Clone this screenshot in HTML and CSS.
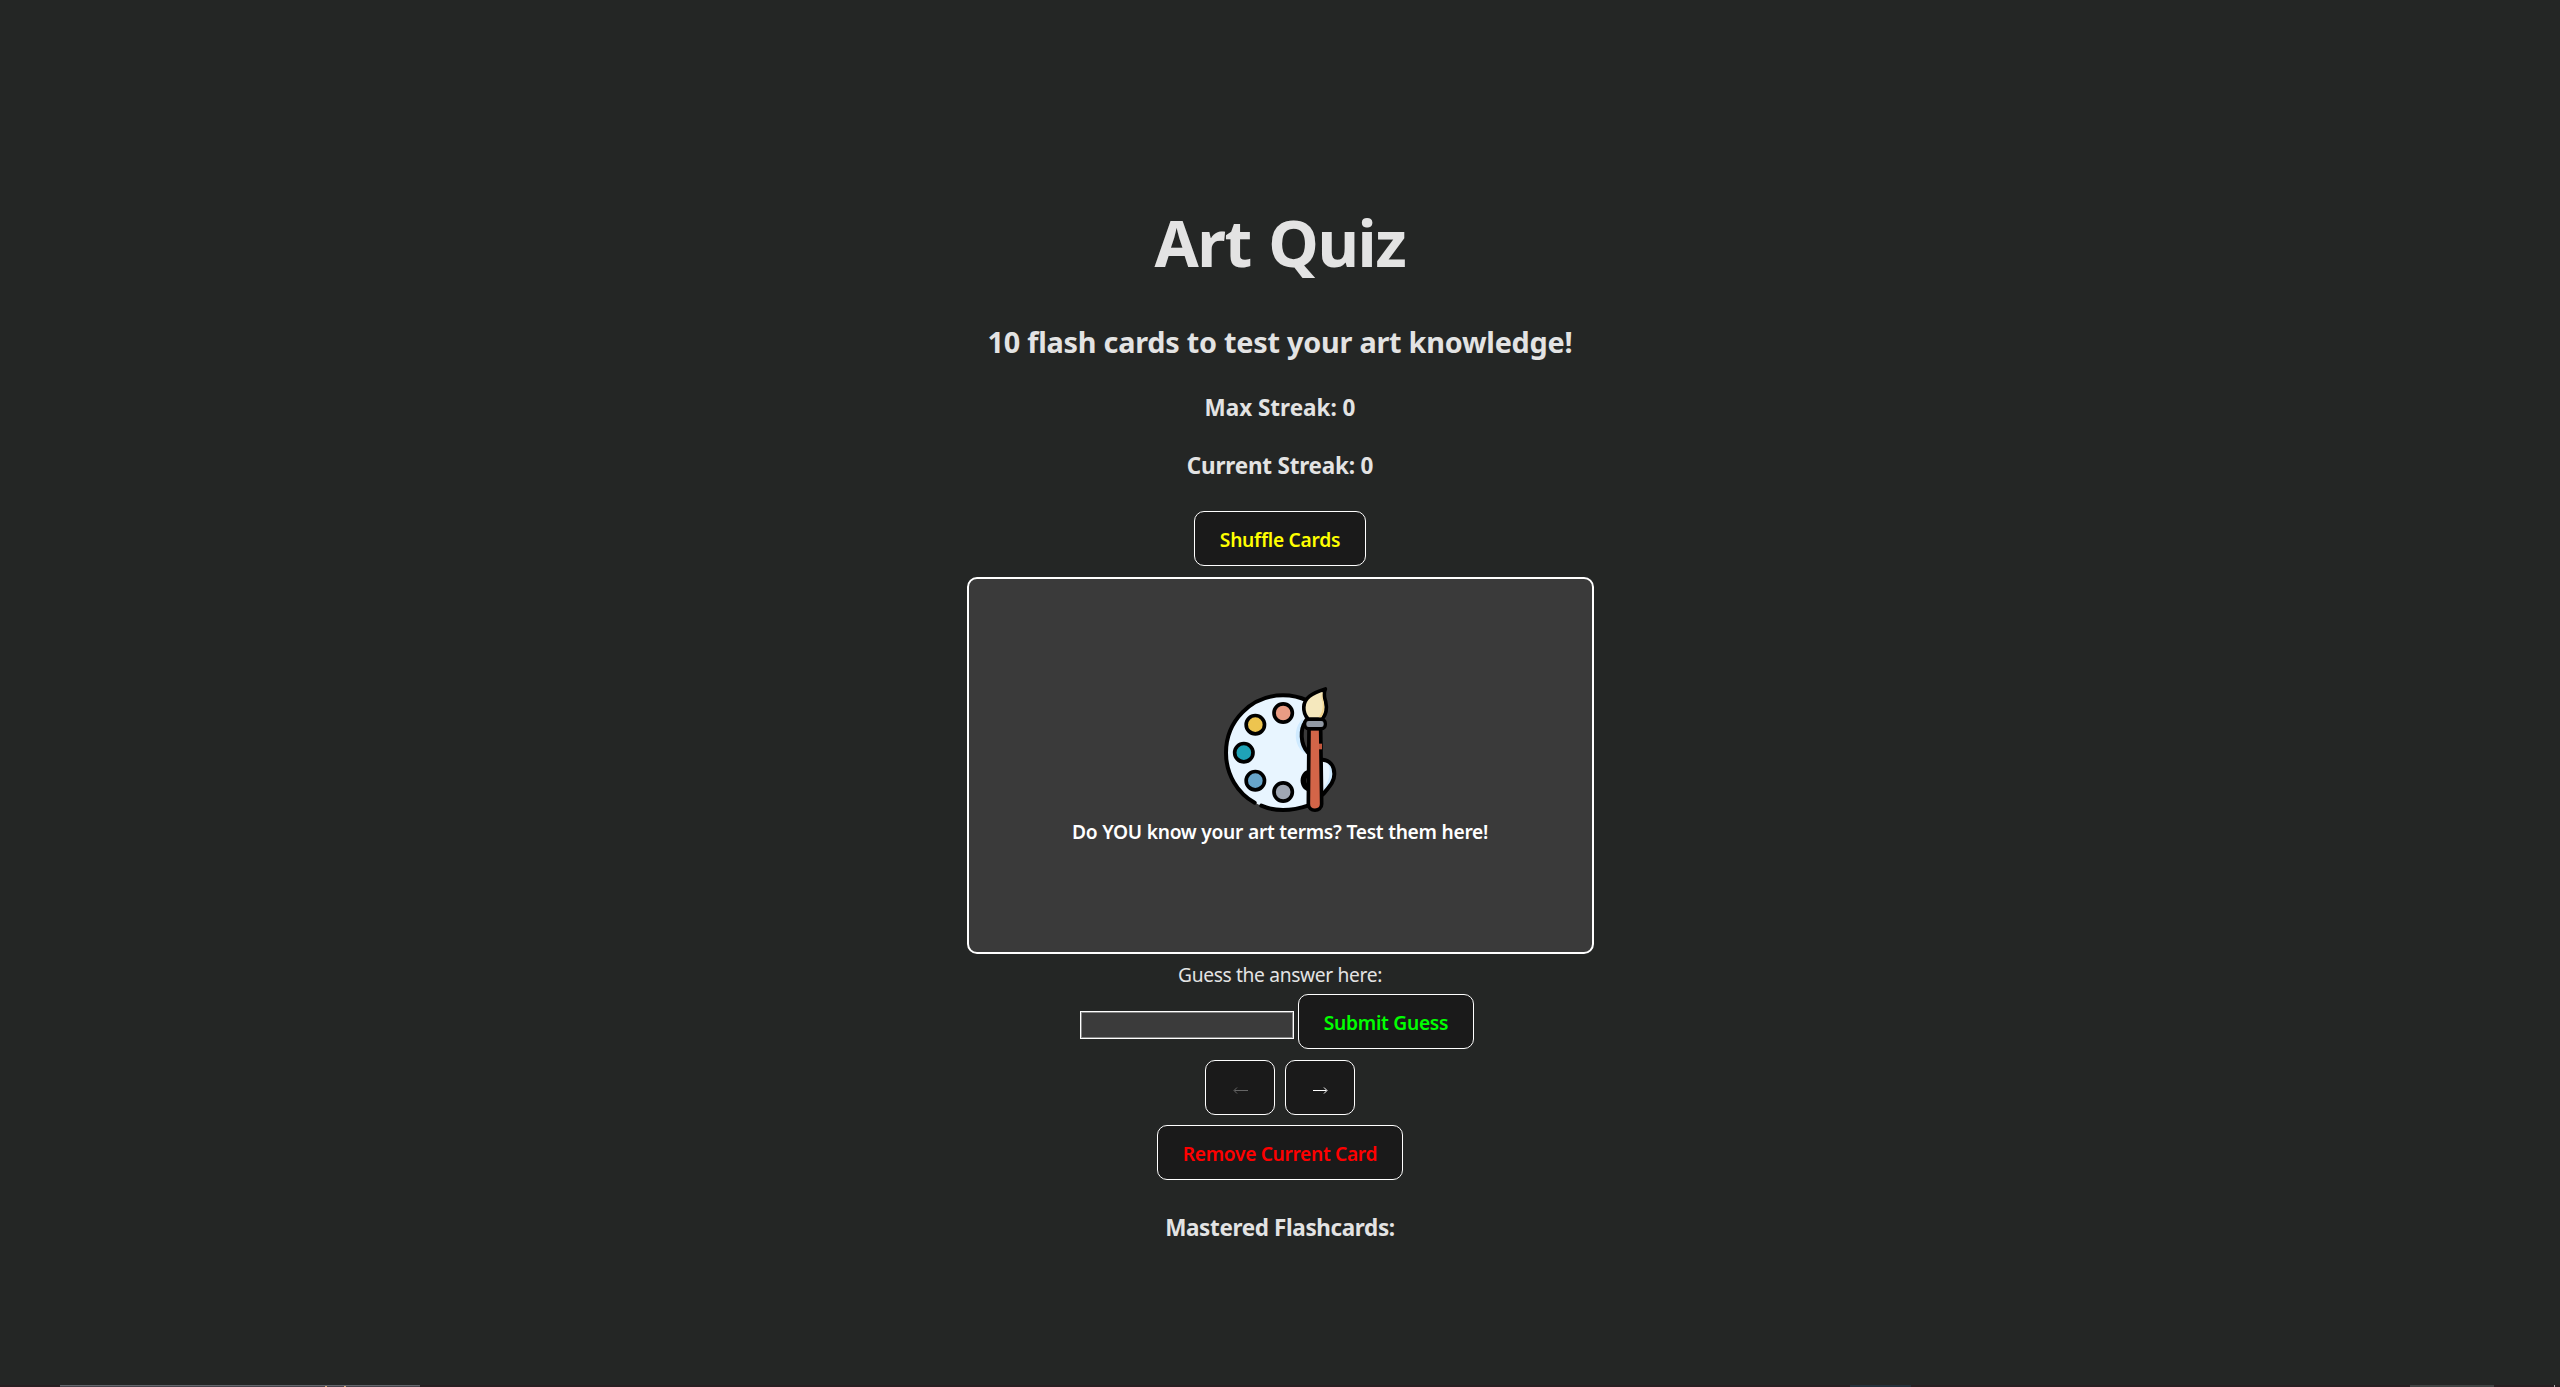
FILE: index.html
```
<!DOCTYPE html>
<html lang="en">
<head>
<meta charset="utf-8">
<title>Art Quiz</title>
<link rel="stylesheet" href="styles.css">
</head>
<body>
<main class="quiz">
  <h1 class="title">Art Quiz</h1>
  <h2 class="subtitle">10 flash cards to test your art knowledge!</h2>
  <h3 class="streak max">Max Streak: 0</h3>
  <h3 class="streak current">Current Streak: 0</h3>
  <button class="btn shuffle">Shuffle Cards</button>
  <section class="card">
    <svg class="palette" viewBox="60 39 360 402" aria-hidden="true">
      <path d="M318 92C296 81 272 76 249 76C154 76 78 153 78 248C78 343 154 420 249 420C276 420 303 415 326 404L368 372C389 357 403 337 403 312C403 286 388 271 367 269L325 246C313 240 305 219 305 196C305 181 309 167 314 154Z" fill="#e8f5ff"/>
      <path d="M308 148C283 166 275 228 318 252L322 242C301 221 299 188 313 161Z" fill="#cfeaff"/>
      <path d="M367 269C388 269 403 286 403 312C403 337 387 352 370 372Z" fill="#e8f5ff"/>
      <path d="M367 269C382 273 389 286 389 307C389 326 380 343 370 356L370 372C388 353 403 337 403 312C403 286 388 271 367 269Z" fill="#cfeaff"/>
      <path d="M316 154C304 174 300 222 324 246V156Z" fill="#3a3a3a"/>
      <g fill="none" stroke="#000" stroke-width="12" stroke-linecap="round" stroke-linejoin="round">
        <path d="M322 92C299 81 274 76 249 76C154 76 78 153 78 248C78 314 113 370 164 398"/>
        <path d="M184 407C204 416 226 420 249 420C276 420 300 415 326 406"/>
        <path d="M317 154C300 177 300 222 324 248"/>
        <path d="M368 269C389 271 403 287 403 312C403 336 388 350 369 373"/>
      </g>
      <path d="M325 299C294 307 294 356 325 364Z"/>
      <path d="M325 318C316 326 316 338 325 345Z" fill="#3a3a3a"/>
      <g stroke="#000" stroke-width="11">
        <circle cx="249.500" cy="129" r="27.500" fill="#e99c84"/>
        <circle cx="166" cy="164" r="27.500" fill="#edc44f"/>
        <circle cx="131.500" cy="248" r="27.500" fill="#1fa3b7"/>
        <circle cx="166" cy="332" r="27.500" fill="#67a5ca"/>
        <circle cx="249.500" cy="366" r="27.500" fill="#a0a7b3"/>
      </g>
      <path d="M327 176H362L365 402C365 427 325 427 325 402Z" fill="#d36548" stroke="#000" stroke-width="11"/>
      <path d="M357 221H366V238H357Z" fill="#c4573d"/>
      <rect x="314" y="148" width="62" height="28" rx="12" fill="#929aa5" stroke="#000" stroke-width="10"/>
      <path d="M324 147C306 125 307 96 328 79C343 67 360 62 376 57C369 73 374 84 377 95C382 117 377 135 367 147Z" fill="#f5e8bd" stroke="#000" stroke-width="11" stroke-linejoin="round"/>
      <path d="M366 70C361 87 371 91 368 115C366 129 360 137 356 142H364C373 128 374 110 370 94C367 85 366 76 368 68Z" fill="#f4d58c"/>
    </svg>
    <p class="prompt">Do YOU know your art terms? Test them here!</p>
  </section>
  <label class="guess-label" for="guess">Guess the answer here:</label>
  <div class="guess-row">
    <input class="guess-input" id="guess" type="text">
    <button class="btn submit">Submit Guess</button>
  </div>
  <nav class="arrows">
    <button class="btn arrow previous" disabled aria-label="Previous">
      <svg class="arrow-icon" viewBox="0 0 15 9"><path d="M15 4.500H1.500M4 1.500L1 4.500L4 7.500"/></svg>
    </button>
    <button class="btn arrow next" aria-label="Next">
      <svg class="arrow-icon" viewBox="0 0 15 9"><path d="M0 4.500H13.500M11 1.500L14 4.500L11 7.500"/></svg>
    </button>
  </nav>
  <button class="btn remove">Remove Current Card</button>
  <h3 class="streak mastered">Mastered Flashcards:</h3>
</main>
<footer class="edge">
  <span class="window-edge"><i class="mark"></i><i class="mark"></i></span>
  <span class="blue-edge"></span>
  <span class="tray-edge"></span>
  <span class="corner-edge"></span>
</footer>
</body>
</html>
```
FILE: styles.css
```
* {
  box-sizing: border-box;
}

body {
  margin: 0;
  height: 1387px;
  display: flex;
  flex-direction: column;
  justify-content: space-between;
  overflow: hidden;
  background: #242625;
  color: #e3e3e3;
  font: 400 19.2px/28px "Noto Sans", "Open Sans", sans-serif;
}

.quiz {
  display: flex;
  flex-direction: column;
  align-items: center;
  padding-top: 213px;
  white-space: nowrap;
}

.title {
  margin: 0;
  font-size: 64px;
  line-height: 60px;
  letter-spacing: -1.4px;
  word-spacing: 2px;
}

.subtitle {
  margin: 49px 0 0;
  font-size: 28.8px;
  line-height: 40px;
  letter-spacing: -0.23px;
}

.streak {
  margin: 0;
  font-size: 22.46px;
  line-height: 30px;
}

.max {
  margin-top: 31px;
}

.current {
  margin-top: 28px;
  letter-spacing: -0.2px;
}

.btn {
  height: 55px;
  padding: 2px 0 0;
  border: 1px solid #fff;
  border-radius: 10px;
  background: #1a1a1a;
  font: 600 19.2px/28px "Noto Sans", "Open Sans", sans-serif;
  letter-spacing: -0.27px;
}

.shuffle {
  width: 172px;
  margin-top: 30px;
  color: #ff0;
}

.card {
  width: 627px;
  height: 377px;
  margin-top: 11px;
  padding-top: 104px;
  display: flex;
  flex-direction: column;
  align-items: center;
  border: 2px solid #fff;
  border-radius: 10px;
  background: #3a3a3a;
}

.palette {
  width: 120px;
  height: 134px;
}

.prompt {
  margin: 1px 0 0;
  color: #fff;
  font-weight: 600;
  letter-spacing: -0.3px;
  word-spacing: 0.2px;
}

.guess-label {
  margin-top: 7px;
  letter-spacing: -0.34px;
}

.guess-row {
  display: flex;
  gap: 4px;
  margin-top: 5px;
  padding-right: 6px;
}

.guess-input {
  width: 214px;
  height: 28px;
  margin: 17px 0 0;
  border: 1px solid #fff;
  outline: 1px solid #858585;
  outline-offset: -2px;
  background: #3b3b3b;
  color: #fff;
}

.submit {
  width: 176px;
  color: #0f0;
}

.arrows {
  display: flex;
  gap: 10px;
  margin-top: 11px;
}

.arrow {
  width: 70px;
  padding: 6px 0 0;
  display: flex;
  align-items: center;
  justify-content: center;
  color: #fff;
}

.previous {
  color: #666;
}

.arrow-icon {
  width: 15px;
  height: 9px;
  fill: none;
  stroke: currentColor;
  stroke-width: 1;
}

.remove {
  width: 246px;
  margin-top: 10px;
  color: #f00;
  letter-spacing: -0.33px;
}

.mastered {
  margin-top: 33px;
  letter-spacing: -0.36px;
}

.edge {
  height: 2px;
  display: flex;
  padding-left: 60px;
  background: #281f22;
}

.window-edge {
  width: 360px;
  display: flex;
  gap: 17px;
  padding-left: 265px;
  border-top: 1px solid #65666d;
  background: #47434b;
}

.mark {
  width: 2px;
  background: #d0a77a;
}

.blue-edge {
  width: 61px;
  margin-left: 1430px;
  background: #26303b;
}

.tray-edge {
  width: 84px;
  margin-left: 499px;
  background: #414243;
}

.corner-edge {
  width: 1px;
  margin-left: 60px;
  background: #aaa;
}
```
